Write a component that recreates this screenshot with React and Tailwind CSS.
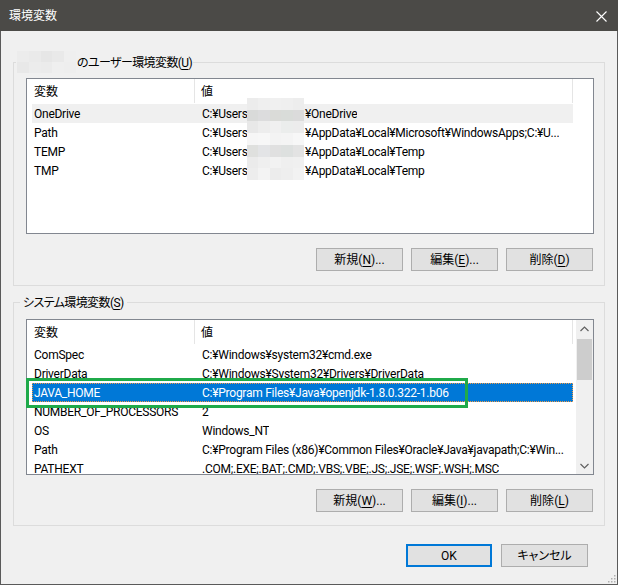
import React from "react";

// mosaic colours used to hide the user name
const nameMosaic = [
  "bg-[#ececec]", "bg-[#eaeaea]", "bg-[#e6e6e6]", "bg-[#e9e9e9]", "bg-[#efefef]",
  "bg-[#e8e8e8]", "bg-[#ececec]", "bg-[#ebebeb]", "bg-[#efefef]", "bg-[#eeeeee]",
];

const valueMosaic = [
  "bg-[#ececec]", "bg-[#efefef]", "bg-[#f0f0f0]", "bg-[#efefef]", "bg-[#ededed]",
  "bg-[#d9dad9]", "bg-[#dcdcdd]", "bg-[#dadbd8]", "bg-[#d9dcd9]", "bg-[#dbdbdb]",
  "bg-[#e8e8e8]", "bg-[#ededed]", "bg-[#f0f0f0]", "bg-[#ebedec]", "bg-[#ececec]",
  "bg-[#f6f6f6]", "bg-[#f7f7f7]", "bg-[#f3f3f3]", "bg-[#f4f4f4]", "bg-[#f7f7f7]",
  "bg-[#dfe0de]", "bg-[#e3e4e6]", "bg-[#e0e0e0]", "bg-[#dde0df]", "bg-[#e3e3e3]",
  "bg-[#ebebeb]", "bg-[#efefef]", "bg-[#f2f2f2]", "bg-[#efefef]", "bg-[#f0f0f0]",
  "bg-[#ededed]", "bg-[#f3f3f3]", "bg-[#ececec]", "bg-[#eeeeee]", "bg-[#f2f2f2]",
];

const userVars = [
  { name: "OneDrive", rest: "¥OneDrive", hover: true },
  { name: "Path", rest: "¥AppData¥Local¥Microsoft¥WindowsApps;C:¥U..." },
  { name: "TEMP", rest: "¥AppData¥Local¥Temp" },
  { name: "TMP", rest: "¥AppData¥Local¥Temp" },
];

const systemVars = [
  { name: "ComSpec", value: "C:¥Windows¥system32¥cmd.exe" },
  { name: "DriverData", value: "C:¥Windows¥System32¥Drivers¥DriverData" },
  { name: "JAVA_HOME", value: "C:¥Program Files¥Java¥openjdk-1.8.0.322-1.b06", selected: true },
  { name: "NUMBER_OF_PROCESSORS", value: "2" },
  { name: "OS", value: "Windows_NT" },
  { name: "Path", value: "C:¥Program Files (x86)¥Common Files¥Oracle¥Java¥javapath;C:¥Win..." },
  { name: "PATHEXT", value: ".COM;.EXE;.BAT;.CMD;.VBS;.VBE;.JS;.JSE;.WSF;.WSH;.MSC" },
];

function Mnemonic({ label, keyChar, dots }) {
  return (
    <>
      {label}(<span className="underline underline-offset-2">{keyChar}</span>){dots ? "..." : ""}
    </>
  );
}

function Button({ children, primary }) {
  return (
    <button
      className={
        primary
          ? "w-[86px] h-[23px] bg-[#e1e1e1] border-2 border-[#0078d7] text-black leading-none"
          : "w-[87px] h-[23px] bg-[#e1e1e1] border border-[#adadad] text-black leading-none"
      }
    >
      {children}
    </button>
  );
}

function ListHeader() {
  return (
    <div className="flex h-[25px] pl-[5px] shrink-0">
      <div className="w-[163px] pl-[2px] pt-[1px] flex items-center border-r border-[#e5e5e5] mb-[1px]">変数</div>
      <div className="w-[378px] pl-[6px] pt-[1px] flex items-center border-r border-[#e5e5e5] mb-[1px]">値</div>
    </div>
  );
}

function Row({ name, children, hover, selected }) {
  let cls = "flex h-[19px] w-[541px] items-center whitespace-nowrap overflow-hidden tracking-[-0.25px]";
  if (hover) cls += " bg-[#f0f0f0]";
  if (selected) cls += " bg-[#0078d7] text-white border border-dotted border-[#f29b45]";
  return (
    <div className="pl-[5px]">
      <div className={cls}>
        <div className={selected ? "w-[162px] pl-[1px] shrink-0" : "w-[163px] pl-[2px] shrink-0"}>{name}</div>
        <div className="pl-[7px] overflow-hidden">{children}</div>
      </div>
    </div>
  );
}

function Chevron({ up }) {
  return (
    <svg width="9" height="6" viewBox="0 0 9 6" fill="none">
      <path d={up ? "M0.5 5 L4.5 1 L8.5 5" : "M0.5 1 L4.5 5 L8.5 1"} stroke="#606060" strokeWidth="1.2" />
    </svg>
  );
}

export default function App() {
  return (
    <div className="w-[618px] h-[585px] flex flex-col bg-[#f0f0f0] border-x border-b border-[#5a5a5a] relative text-[12px] leading-[16px] text-black font-['Roboto','Noto_Sans_CJK_JP',sans-serif] [font-feature-settings:'palt'_1]">
      {/* title bar */}
      <div className="h-[31px] -mx-px bg-[#4b4a47] flex items-center justify-between pl-[9px] pr-[11px] pt-[1px] text-white shrink-0">
        <span className="text-[12px]">環境変数</span>
        <svg width="11" height="11" viewBox="0 0 11 11">
          <path d="M0.5 0.5 L10.5 10.5 M10.5 0.5 L0.5 10.5" stroke="#ffffff" strokeWidth="1.1" />
        </svg>
      </div>

      <div className="flex flex-col px-[12px]">
        {/* user variables */}
        <fieldset className="mt-[23px] border border-[#dcdcdc]">
          <legend className="ml-[2px] px-[1px] leading-[16px]">
            <span className="relative inline-block w-[60px] h-[16px] align-top">
              <span className="absolute left-0 top-[-3px] w-[59px] h-[22px] grid grid-cols-5 grid-rows-2">
                {nameMosaic.map((c, i) => (
                  <span key={i} className={c} />
                ))}
              </span>
            </span>
            <span className="relative top-[1px] tracking-[-0.6px]">
              のユーザー環境変数(<span className="underline underline-offset-2">U</span>)
            </span>
          </legend>
          <div className="relative ml-[12px] mt-[8px] w-[568px] h-[156px] border border-[#828790] bg-white flex flex-col">
            <ListHeader />
            {userVars.map((v) => (
              <Row key={v.name} name={v.name} hover={v.hover}>
                <span className="inline-block w-[103px]">C:¥Users</span>
                {v.rest}
              </Row>
            ))}
            {/* hidden user name */}
            <div className="absolute left-[220px] top-[19px] w-[57px] h-[82px] grid grid-cols-5 grid-rows-7">
              {valueMosaic.map((c, i) => (
                <span key={i} className={c} />
              ))}
            </div>
          </div>
          <div className="flex justify-end gap-[8px] mr-[11px] mt-[14px] mb-[14px]">
            <Button><Mnemonic label="新規" keyChar="N" dots /></Button>
            <Button><Mnemonic label="編集" keyChar="E" dots /></Button>
            <Button><Mnemonic label="削除" keyChar="D" /></Button>
          </div>
        </fieldset>

        {/* system variables */}
        <fieldset className="mt-[8px] border border-[#dcdcdc]">
          <legend className="ml-[6px] px-[3px] leading-[16px]">
            <span className="relative top-[1px] tracking-[-0.6px]">
              システム環境変数(<span className="underline underline-offset-2">S</span>)
            </span>
          </legend>
          <div className="relative ml-[12px] mt-[9px] w-[568px] h-[156px] border border-[#828790] bg-white flex">
            <div className="flex-1 flex flex-col overflow-hidden">
              <ListHeader />
              {systemVars.map((v) => (
                <Row key={v.name} name={v.name} selected={v.selected}>
                  {v.value}
                </Row>
              ))}
            </div>
            {/* scrollbar */}
            <div className="w-[17px] bg-[#f0f0f0] flex flex-col">
              <div className="h-[17px] flex items-center justify-center">
                <Chevron up />
              </div>
              <div className="flex-1 pt-[2px]">
                <div className="h-[41px] mx-[1px] bg-[#cdcdcd]" />
              </div>
              <div className="h-[17px] flex items-center justify-center">
                <Chevron />
              </div>
            </div>
            {/* highlight frame */}
            <div className="absolute left-[-1px] top-[58px] w-[442px] h-[30px] border-[3px] border-[#1faa4a]" />
          </div>
          <div className="flex justify-end gap-[8px] mr-[11px] mt-[14px] mb-[13px]">
            <Button><Mnemonic label="新規" keyChar="W" dots /></Button>
            <Button><Mnemonic label="編集" keyChar="I" dots /></Button>
            <Button><Mnemonic label="削除" keyChar="L" /></Button>
          </div>
        </fieldset>

        <div className="flex justify-end gap-[9px] mr-[17px] mt-[18px]">
          <Button primary>OK</Button>
          <Button>キャンセル</Button>
        </div>
      </div>

      {/* size grip */}
      <svg className="absolute right-[1px] bottom-[1px]" width="10" height="10" viewBox="0 0 10 10">
        {[[8, 2], [5, 5], [8, 5], [2, 8], [5, 8], [8, 8]].map(([x, y]) => (
          <rect key={x + "-" + y} x={x} y={y} width="1.5" height="1.5" fill="#b0b0b0" />
        ))}
      </svg>
    </div>
  );
}
